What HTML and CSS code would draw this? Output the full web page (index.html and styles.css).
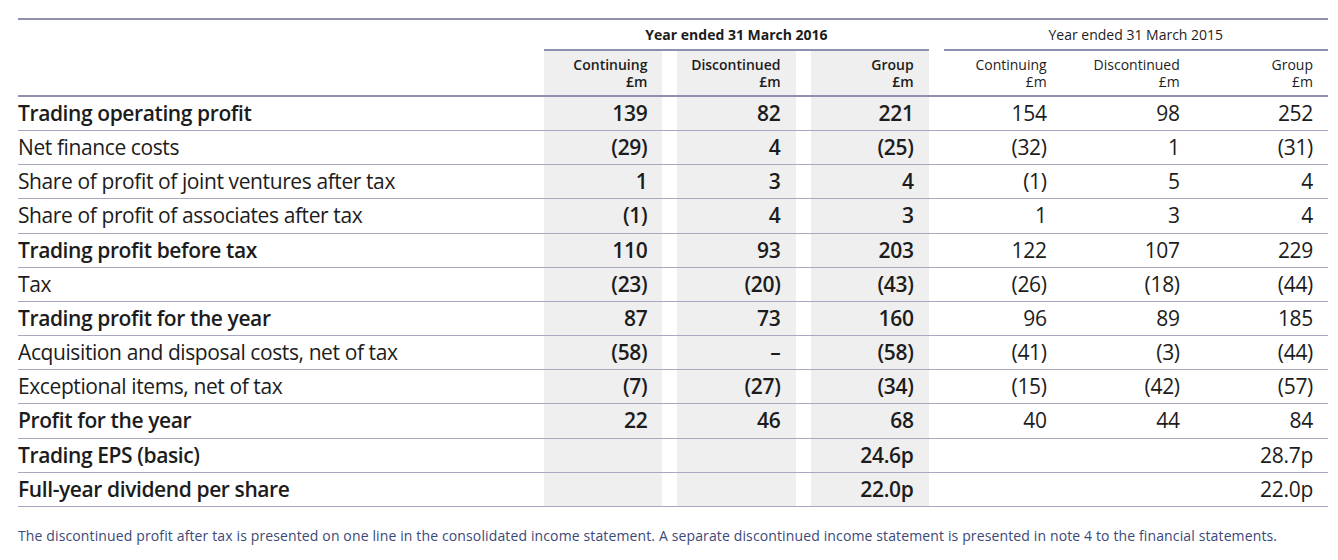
FILE: index.html
```html
<!DOCTYPE html>
<html lang="en">
<head>
<meta charset="utf-8">
<title>Trading results</title>
<link rel="stylesheet" href="styles.css">
</head>
<body>
<table class="fin">
  <colgroup>
    <col class="c-label">
    <col class="c-val"><col class="c-gap"><col class="c-val"><col class="c-gap"><col class="c-val">
    <col class="c-gap">
    <col class="c-val"><col class="c-gap"><col class="c-val"><col class="c-gap"><col class="c-val">
  </colgroup>
  <thead>
    <tr class="years">
      <th class="blank"></th>
      <th colspan="5" class="year cur">Year ended 31 March 2016</th>
      <th class="blank"></th>
      <th colspan="5" class="year prev">Year ended 31 March 2015</th>
    </tr>
    <tr class="heads">
      <th class="label"></th>
      <th class="cur shade">Continuing<br>£m</th><th class="gap"></th>
      <th class="cur shade">Discontinued<br>£m</th><th class="gap"></th>
      <th class="cur shade">Group<br>£m</th><th class="gap"></th>
      <th class="prev">Continuing<br>£m</th><th class="gap"></th>
      <th class="prev">Discontinued<br>£m</th><th class="gap"></th>
      <th class="prev">Group<br>£m</th>
    </tr>
  </thead>
  <tbody>
    <tr class="strong">
      <td class="label">Trading operating profit</td>
      <td class="cur shade">139</td><td class="gap"></td><td class="cur shade">82</td><td class="gap"></td><td class="cur shade">221</td><td class="gap"></td>
      <td class="prev">154</td><td class="gap"></td><td class="prev">98</td><td class="gap"></td><td class="prev">252</td>
    </tr>
    <tr>
      <td class="label">Net finance costs</td>
      <td class="cur shade">(29)</td><td class="gap"></td><td class="cur shade">4</td><td class="gap"></td><td class="cur shade">(25)</td><td class="gap"></td>
      <td class="prev">(32)</td><td class="gap"></td><td class="prev">1</td><td class="gap"></td><td class="prev">(31)</td>
    </tr>
    <tr>
      <td class="label">Share of profit of joint ventures after tax</td>
      <td class="cur shade">1</td><td class="gap"></td><td class="cur shade">3</td><td class="gap"></td><td class="cur shade">4</td><td class="gap"></td>
      <td class="prev">(1)</td><td class="gap"></td><td class="prev">5</td><td class="gap"></td><td class="prev">4</td>
    </tr>
    <tr>
      <td class="label">Share of profit of associates after tax</td>
      <td class="cur shade">(1)</td><td class="gap"></td><td class="cur shade">4</td><td class="gap"></td><td class="cur shade">3</td><td class="gap"></td>
      <td class="prev">1</td><td class="gap"></td><td class="prev">3</td><td class="gap"></td><td class="prev">4</td>
    </tr>
    <tr class="strong">
      <td class="label">Trading profit before tax</td>
      <td class="cur shade">110</td><td class="gap"></td><td class="cur shade">93</td><td class="gap"></td><td class="cur shade">203</td><td class="gap"></td>
      <td class="prev">122</td><td class="gap"></td><td class="prev">107</td><td class="gap"></td><td class="prev">229</td>
    </tr>
    <tr>
      <td class="label">Tax</td>
      <td class="cur shade">(23)</td><td class="gap"></td><td class="cur shade">(20)</td><td class="gap"></td><td class="cur shade">(43)</td><td class="gap"></td>
      <td class="prev">(26)</td><td class="gap"></td><td class="prev">(18)</td><td class="gap"></td><td class="prev">(44)</td>
    </tr>
    <tr class="strong">
      <td class="label">Trading profit for the year</td>
      <td class="cur shade">87</td><td class="gap"></td><td class="cur shade">73</td><td class="gap"></td><td class="cur shade">160</td><td class="gap"></td>
      <td class="prev">96</td><td class="gap"></td><td class="prev">89</td><td class="gap"></td><td class="prev">185</td>
    </tr>
    <tr>
      <td class="label">Acquisition and disposal costs, net of tax</td>
      <td class="cur shade">(58)</td><td class="gap"></td><td class="cur shade">–</td><td class="gap"></td><td class="cur shade">(58)</td><td class="gap"></td>
      <td class="prev">(41)</td><td class="gap"></td><td class="prev">(3)</td><td class="gap"></td><td class="prev">(44)</td>
    </tr>
    <tr>
      <td class="label">Exceptional items, net of tax</td>
      <td class="cur shade">(7)</td><td class="gap"></td><td class="cur shade">(27)</td><td class="gap"></td><td class="cur shade">(34)</td><td class="gap"></td>
      <td class="prev">(15)</td><td class="gap"></td><td class="prev">(42)</td><td class="gap"></td><td class="prev">(57)</td>
    </tr>
    <tr class="strong">
      <td class="label">Profit for the year</td>
      <td class="cur shade">22</td><td class="gap"></td><td class="cur shade">46</td><td class="gap"></td><td class="cur shade">68</td><td class="gap"></td>
      <td class="prev">40</td><td class="gap"></td><td class="prev">44</td><td class="gap"></td><td class="prev">84</td>
    </tr>
    <tr class="strong">
      <td class="label">Trading EPS (basic)</td>
      <td class="cur shade"></td><td class="gap"></td><td class="cur shade"></td><td class="gap"></td><td class="cur shade">24.6p</td><td class="gap"></td>
      <td class="prev"></td><td class="gap"></td><td class="prev"></td><td class="gap"></td><td class="prev">28.7p</td>
    </tr>
    <tr class="strong last">
      <td class="label">Full-year dividend per share</td>
      <td class="cur shade"></td><td class="gap"></td><td class="cur shade"></td><td class="gap"></td><td class="cur shade">22.0p</td><td class="gap"></td>
      <td class="prev"></td><td class="gap"></td><td class="prev"></td><td class="gap"></td><td class="prev">22.0p</td>
    </tr>
  </tbody>
</table>
<p class="note">The discontinued profit after tax is presented on one line in the consolidated income statement. A separate discontinued income statement is presented in note 4 to the financial statements.</p>
</body>
</html>
```
FILE: styles.css
```css
html, body {
  background: #ffffff;
}
body {
  margin: 0;
  padding: 18px 0 0 18px;
  font-family: "Open Sans", "Noto Sans", sans-serif;
  color: #1c1c1c;
}
.fin {
  table-layout: fixed;
  border-collapse: separate;
  border-spacing: 0;
  width: 1310px;
  border-top: 2px solid #8e90ae;
}
.c-label { width: 526px; }
.c-val { width: 118px; }
.c-gap { width: 15px; }

.fin th, .fin td {
  padding: 0;
  text-align: right;
  white-space: nowrap;
  overflow: visible;
}

.years th {
  height: 29px;
  font-size: 14px;
  line-height: 17px;
  padding: 0;
  vertical-align: middle;
}
.years .year {
  text-align: center;
  border-bottom: 2px solid #8e90ae;
}
.years .year.cur { font-weight: 700; }
.years .year.prev { font-weight: 400; }

.heads th {
  font-size: 14px;
  line-height: 17px;
  padding: 5px 15px 5px 0;
  border-bottom: 2px solid #8e90ae;
  vertical-align: top;
}
.heads .cur { font-weight: 600; }
.heads .prev { font-weight: 400; }
.heads .gap, .heads .label { padding: 0; }

.shade { background: #efefef; }

.fin tbody td {
  font-size: 21px;
  line-height: 25px;
  padding: 4px 15px 4.17px 0;
  border-bottom: 1px solid #a7a9c2;
  letter-spacing: -0.3px;
}
.fin tbody td.label {
  text-align: left;
  padding-left: 0;
  padding-right: 0;
  font-weight: 400;
  letter-spacing: -0.4px;
}
.fin tbody td.gap { padding: 0; }
.fin tbody td.cur { font-weight: 600; }
.fin tbody td.prev { font-weight: 400; }
.fin tbody tr.strong td.label { font-weight: 600; }

.note {
  margin: 19px 0 0 0;
  font-size: 14px;
  line-height: 20px;
  letter-spacing: 0.13px;
  color: #3b4878;
}
```
